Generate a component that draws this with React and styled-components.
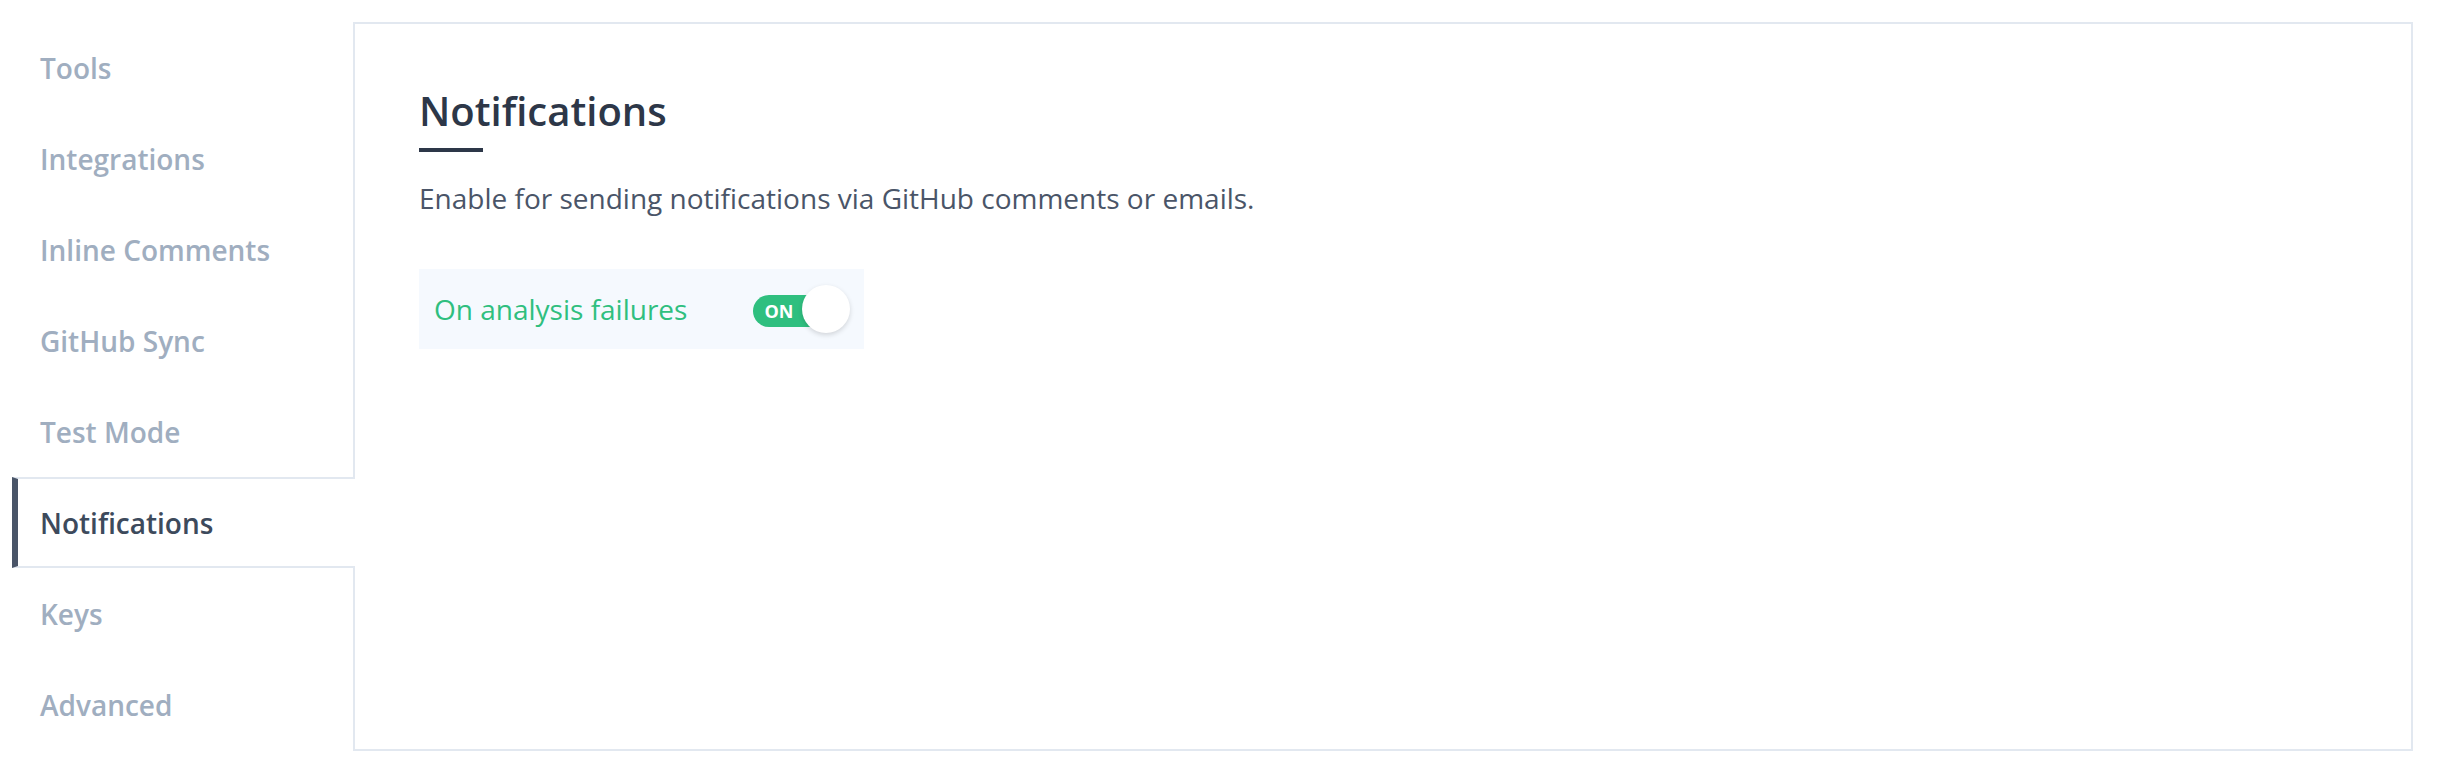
import styled, { createGlobalStyle } from 'styled-components';

const GlobalStyle = createGlobalStyle`
    body {
        margin: 0;
        background: #ffffff;
        font-family: "Open Sans", "Noto Sans", sans-serif;
    }
`

const menu = ['Tools', 'Integrations', 'Inline Comments', 'GitHub Sync', 'Test Mode', 'Notifications', 'Keys', 'Advanced'];

export default function App () {
    return (
        <>
            <GlobalStyle />
            <Page>
                <Sidebar>
                    {menu.map((name) => <MenuItem key={name} active={name === 'Notifications'}>{name}</MenuItem>)}
                </Sidebar>
                <Panel>
                    <Title>Notifications</Title>
                    <Underline />
                    <Description>Enable for sending notifications via GitHub comments or emails.</Description>
                    <OptionRow>
                        <OptionLabel>On analysis failures</OptionLabel>
                        <Toggle>
                            <Pill>ON</Pill>
                            <Knob />
                        </Toggle>
                    </OptionRow>
                </Panel>
            </Page>
        </>
    )
}

const Page = styled.div`
    display: flex;
    padding: 22px 31px 0 12px;
`

const Sidebar = styled.nav`
    flex: none;
    width: 341px;
    display: flex;
    flex-direction: column;
`

const MenuItem = styled.div`
    box-sizing: border-box;
    height: 91px;
    display: flex;
    align-items: center;
    padding-left: 22px;
    border-left: 6px solid ${props => props.active ? '#4a5568' : 'transparent'};
    border-top: 2px solid ${props => props.active ? '#e2e8f0' : 'transparent'};
    border-bottom: 2px solid ${props => props.active ? '#e2e8f0' : 'transparent'};
    margin-right: ${props => props.active ? '-2px' : '0'};
    position: relative;
    z-index: ${props => props.active ? 1 : 0};
    background: #ffffff;
    font-size: 28px;
    font-weight: 600;
    color: ${props => props.active ? '#3d4a5c' : '#a0aec0'};
`

const Panel = styled.main`
    flex: 1;
    box-sizing: border-box;
    height: 729px;
    border: 2px solid #e2e8f0;
    padding: 62px 64px 0 64px;
    display: flex;
    flex-direction: column;
    align-items: flex-start;
`

const Title = styled.h2`
    margin: 0;
    font-size: 40px;
    line-height: 50px;
    font-weight: 600;
    color: #2d3748;
`

const Underline = styled.div`
    margin-top: 12px;
    width: 64px;
    height: 4px;
    background: #2d3748;
`

const Description = styled.p`
    margin: 26px 0 0;
    font-size: 28px;
    line-height: 40px;
    color: #4a5568;
`

const OptionRow = styled.div`
    margin-top: 51px;
    box-sizing: border-box;
    height: 80px;
    display: inline-flex;
    align-items: center;
    gap: 66px;
    padding: 0 14px 0 15px;
    background: #f5f9fe;
`

const OptionLabel = styled.span`
    font-size: 28px;
    color: #2fbf7f;
`

const Toggle = styled.div`
    position: relative;
    width: 97px;
    height: 48px;
    display: flex;
    align-items: center;
`

const Pill = styled.div`
    box-sizing: border-box;
    width: 84px;
    height: 32px;
    border-radius: 16px;
    background: #2fbf7f;
    color: #ffffff;
    font-size: 18px;
    font-weight: 700;
    display: flex;
    align-items: center;
    padding-left: 11px;
    margin-top: 3px;
`

const Knob = styled.div`
    position: absolute;
    right: 0;
    top: 0;
    width: 48px;
    height: 48px;
    border-radius: 50%;
    background: #ffffff;
    box-shadow: 0 2px 5px rgba(0, 0, 0, 0.15);
`
